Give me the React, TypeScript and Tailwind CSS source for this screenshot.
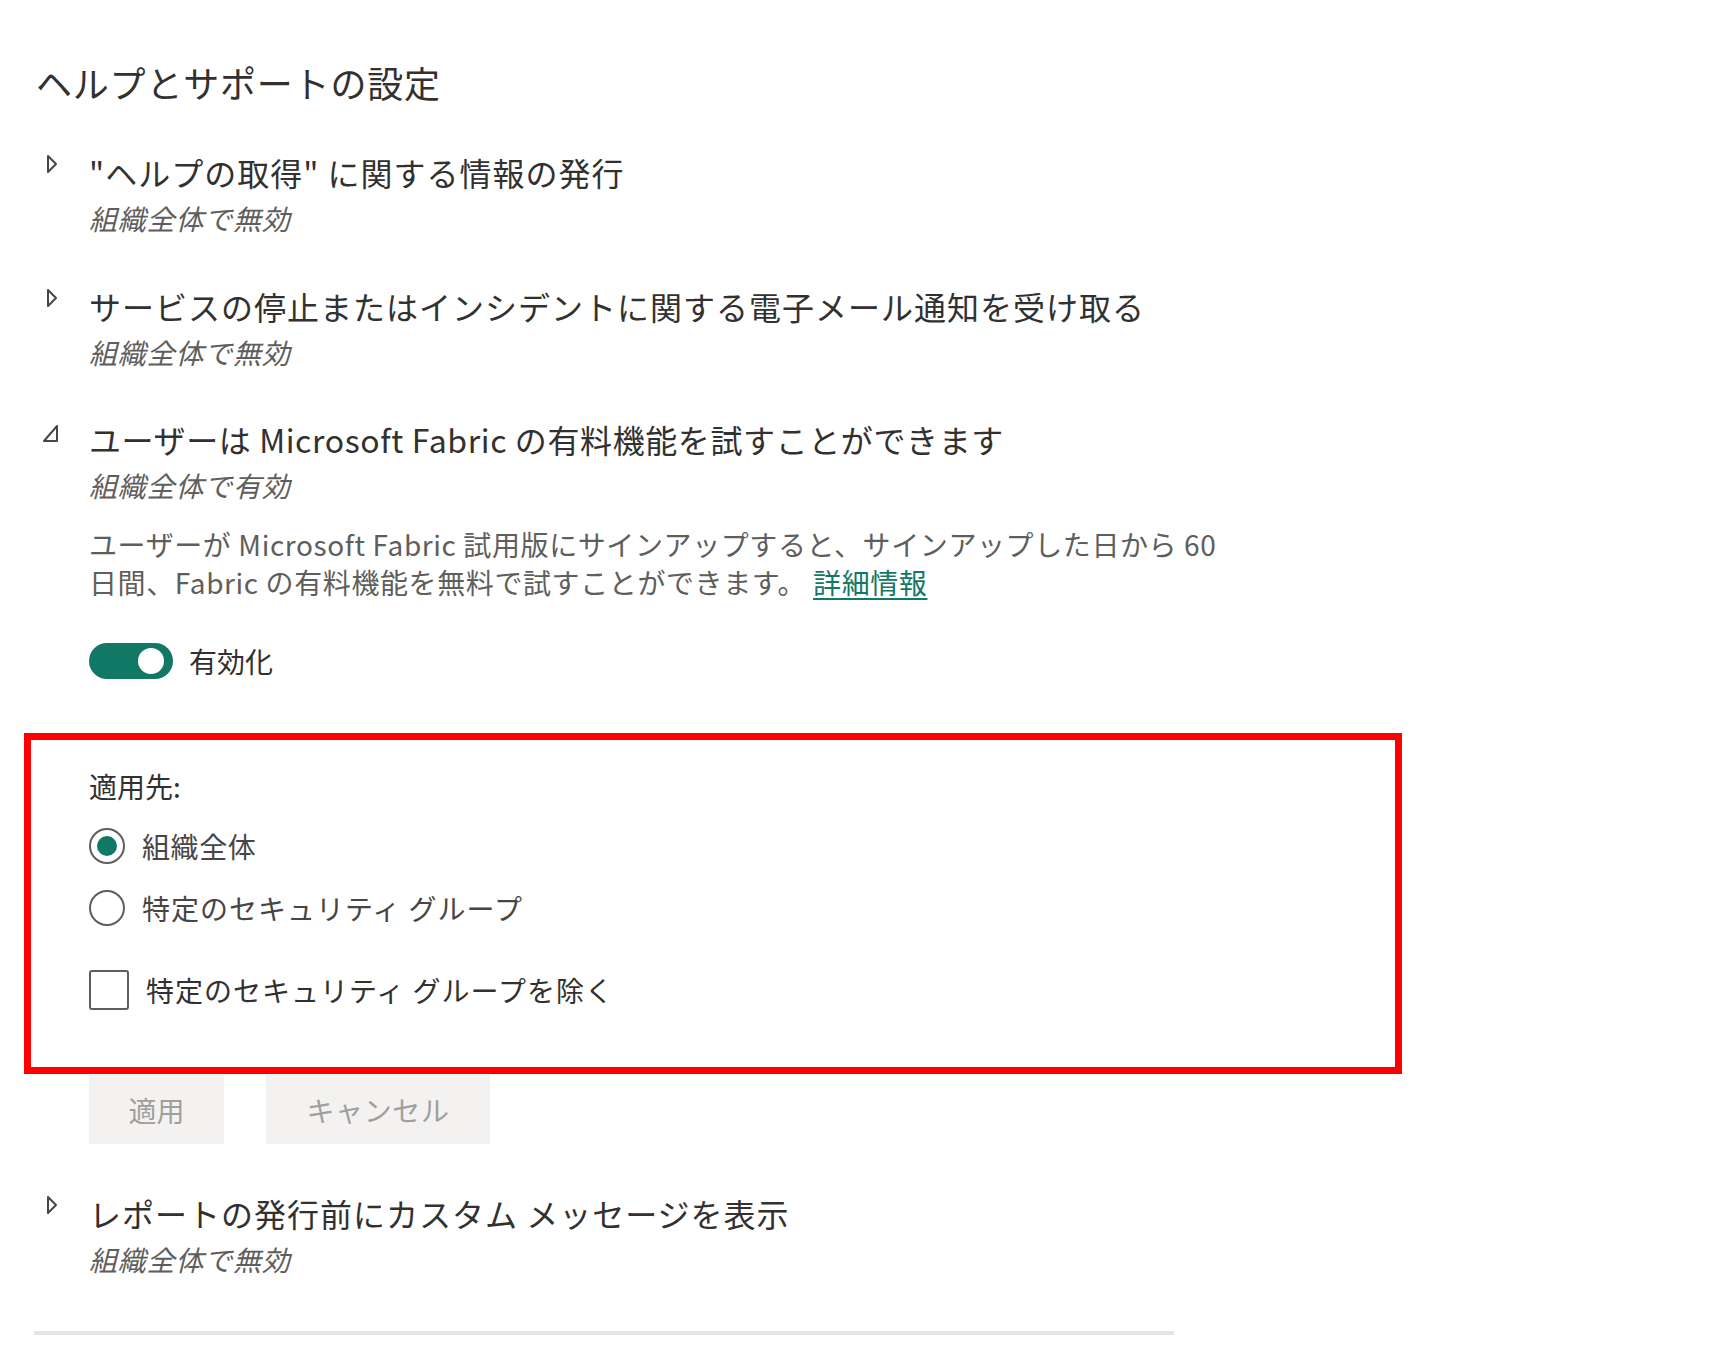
import React from "react";

const FONT = '"Noto Sans CJK JP", "Noto Sans", sans-serif';

function ChevronRight() {
  return (
    <svg width="12" height="20" viewBox="0 0 12 20" className="block">
      <path d="M2 2 L10 10 L2 18 Z" fill="none" stroke="#484644" strokeWidth="2" strokeLinejoin="round" />
    </svg>
  );
}

function ChevronExpanded() {
  return (
    <svg width="18" height="19" viewBox="0 0 18 19" className="block">
      <path d="M15 2 L15 17 L2 17 Z" fill="none" stroke="#484644" strokeWidth="2" strokeLinejoin="round" />
    </svg>
  );
}

function SectionHeader({
  title,
  status,
  expanded = false,
  tight = false,
}: {
  title: string;
  status: string;
  expanded?: boolean;
  tight?: boolean;
}) {
  return (
    <div className="flex">
      <div className="w-[89px] shrink-0 relative">
        {expanded ? (
          <div className="absolute left-[42px] top-[7px]">
            <ChevronExpanded />
          </div>
        ) : (
          <div className="absolute left-[46px] top-[4px]">
            <ChevronRight />
          </div>
        )}
      </div>
      <div className="flex flex-col">
        <div
          className={
            tight
              ? "text-[32px] leading-[44px] text-[#323130] tracking-[0.6px] whitespace-nowrap"
              : "text-[32px] leading-[44px] text-[#323130] tracking-[1px] whitespace-nowrap"
          }
        >
          {title}
        </div>
        <div className="text-[28px] leading-[48px] text-[#605e5c] italic tracking-[0.8px] whitespace-nowrap">{status}</div>
      </div>
    </div>
  );
}

export default function App() {
  return (
    <div className="w-full h-[1350px] bg-white overflow-hidden" style={{ fontFamily: FONT }}>
      <div className="pt-[58px] pl-[36px]">
        <h1 className="text-[36px] leading-[48px] text-[#323130] font-normal tracking-[0.8px]">ヘルプとサポートの設定</h1>
      </div>

      <div className="mt-[44px]">
        <SectionHeader title={'"ヘルプの取得" に関する情報の発行'} status="組織全体で無効" />
      </div>

      <div className="mt-[42px]">
        <SectionHeader title="サービスの停止またはインシデントに関する電子メール通知を受け取る" status="組織全体で無効" />
      </div>

      <div className="mt-[41px]">
        <SectionHeader title="ユーザーは Microsoft Fabric の有料機能を試すことができます" status="組織全体で有効" expanded tight />
      </div>

      <div className="pl-[89px] mt-[16px] text-[28px] leading-[38px] text-[#605e5c] tracking-[0.6px] whitespace-nowrap">
        <div>ユーザーが Microsoft Fabric 試用版にサインアップすると、サインアップした日から 60</div>
        <div>
          日間、Fabric の有料機能を無料で試すことができます。{" "}
          <a href="#" className="text-[#117865] underline underline-offset-4 decoration-[2px]">
            詳細情報
          </a>
        </div>
      </div>

      <div className="pl-[89px] mt-[42px] flex items-center gap-[16px]">
        <div className="w-[84px] h-[36px] rounded-full bg-[#117865] flex items-center justify-end pr-[9px]">
          <div className="w-[26px] h-[26px] rounded-full bg-white" />
        </div>
        <span className="text-[28px] leading-[36px] text-[#323130]">有効化</span>
      </div>

      <div className="ml-[24px] mt-[54px] w-[1378px] border-[7px] border-[#ff0000] pl-[58px] pt-[26px] pb-[57px]">
        <div className="text-[28px] leading-[40px] text-[#323130]">適用先:</div>
        <div className="mt-[20px] h-[40px] flex items-center gap-[17px]">
          <div className="w-[36px] h-[36px] rounded-full border-[2px] border-[#605e5c] flex items-center justify-center">
            <div className="w-[20px] h-[20px] rounded-full bg-[#117865]" />
          </div>
          <span className="text-[28px] text-[#484644] tracking-[0.6px]">組織全体</span>
        </div>
        <div className="mt-[22px] h-[40px] flex items-center gap-[17px]">
          <div className="w-[36px] h-[36px] rounded-full border-[2px] border-[#605e5c]" />
          <span className="text-[28px] text-[#484644] tracking-[1px]">特定のセキュリティ グループ</span>
        </div>
        <div className="mt-[42px] h-[40px] flex items-center gap-[17px]">
          <div className="w-[40px] h-[40px] rounded-[3px] border-[2px] border-[#605e5c]" />
          <span className="text-[28px] text-[#323130] tracking-[1px]">特定のセキュリティ グループを除く</span>
        </div>
      </div>

      <div className="pl-[89px] mt-[1px] flex gap-[42px]">
        <div className="w-[135px] h-[69px] bg-[#f3f2f1] flex items-center justify-center text-[28px] text-[#a19f9d]">適用</div>
        <div className="w-[224px] h-[69px] bg-[#f3f2f1] flex items-center justify-center text-[28px] text-[#a19f9d] tracking-[0.6px]">キャンセル</div>
      </div>

      <div className="mt-[47px]">
        <SectionHeader title="レポートの発行前にカスタム メッセージを表示" status="組織全体で無効" />
      </div>

      <div className="ml-[34px] mt-[48px] w-[1140px] h-[4px] bg-[#e5e5e5]" />
    </div>
  );
}
